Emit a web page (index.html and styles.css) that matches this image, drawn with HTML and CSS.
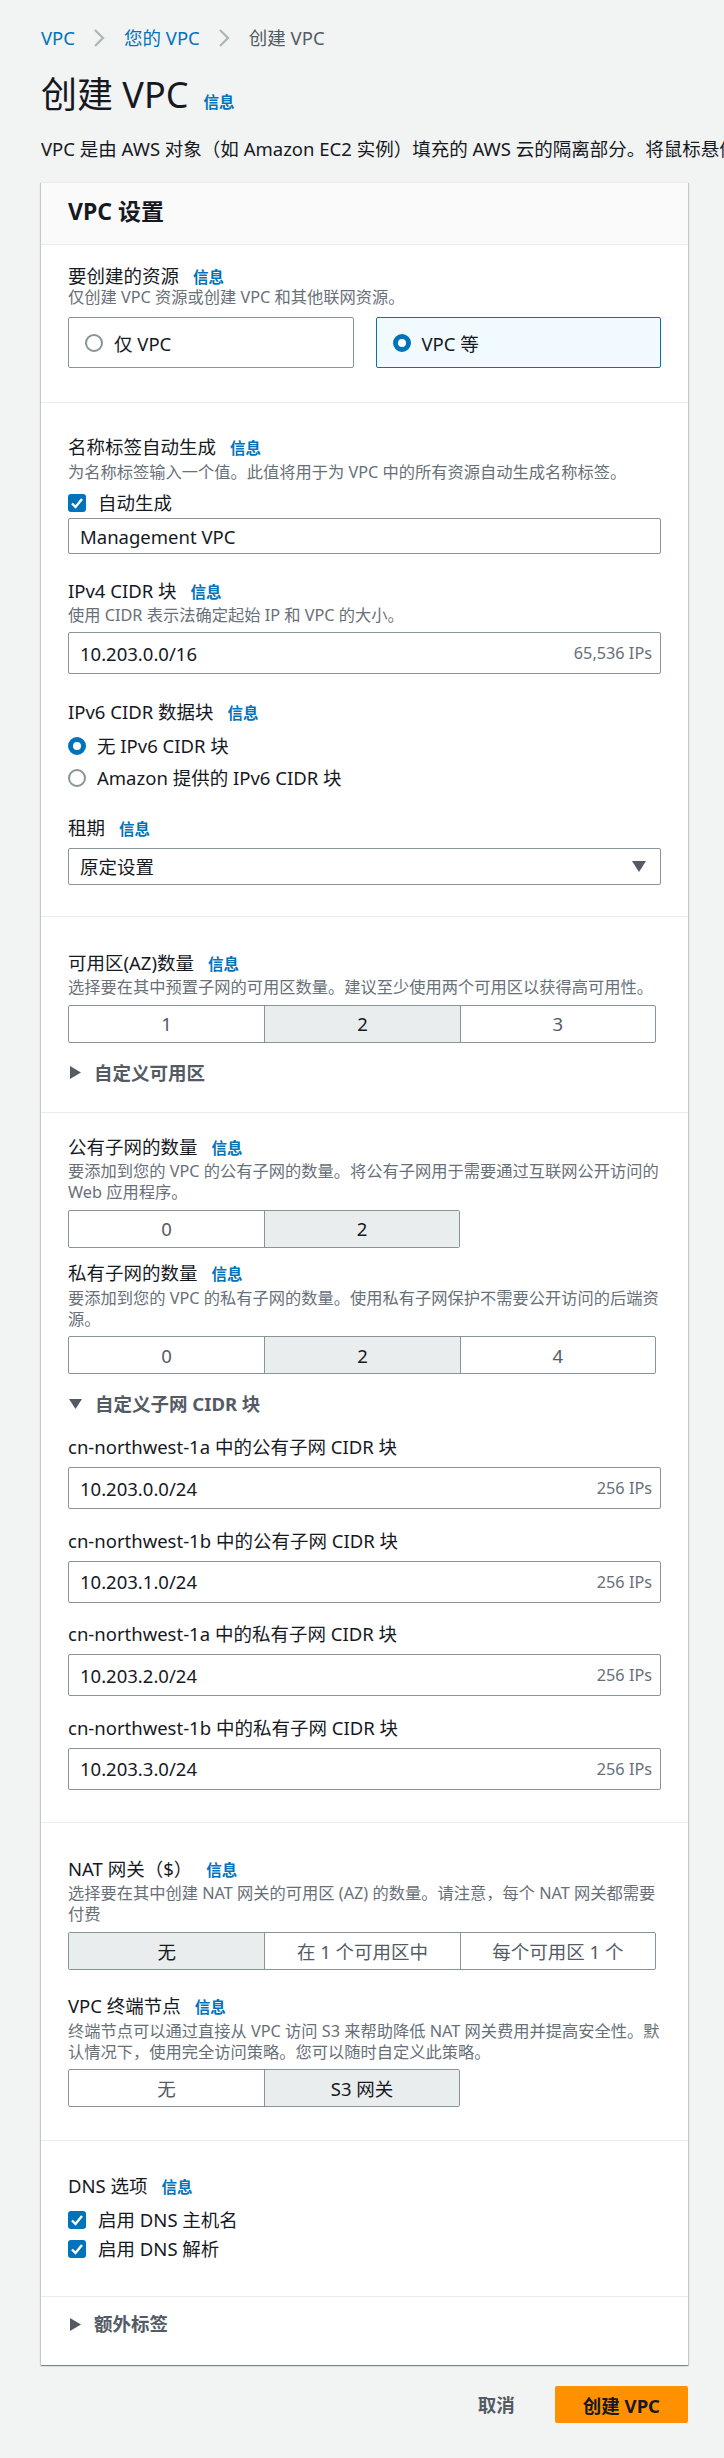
FILE: index.html
```html
<!DOCTYPE html>
<html lang="zh-CN">
<head>
<meta charset="utf-8">
<title>创建 VPC</title>
<link rel="stylesheet" href="styles.css">
</head>
<body>
<div class="page">
  <nav class="breadcrumb">
    <a class="crumb-link">VPC</a>
    <svg class="chev" viewBox="0 0 12 20"><path d="M2 2 L10 10 L2 18"/></svg>
    <a class="crumb-link">您的 VPC</a>
    <svg class="chev" viewBox="0 0 12 20"><path d="M2 2 L10 10 L2 18"/></svg>
    <span class="crumb-current">创建 VPC</span>
  </nav>

  <h1 class="title">创建 VPC<a class="info info-title">信息</a></h1>
  <p class="intro">VPC 是由 AWS 对象（如 Amazon EC2 实例）填充的 AWS 云的隔离部分。将鼠标悬停在资源上可突出显示相关资源。</p>

  <div class="card">
    <div class="card-head"><h2>VPC 设置</h2></div>

    <section class="sec sec-resources">
      <div class="label">要创建的资源<a class="info">信息</a></div>
      <div class="desc desc-tight">仅创建 VPC 资源或创建 VPC 和其他联网资源。</div>
      <div class="tiles">
        <div class="tile"><span class="radio"></span><span>仅 VPC</span></div>
        <div class="tile tile-selected"><span class="radio radio-checked"></span><span>VPC 等</span></div>
      </div>
    </section>

    <section class="sec sec-name">
      <div class="label">名称标签自动生成<a class="info">信息</a></div>
      <div class="desc">为名称标签输入一个值。此值将用于为 VPC 中的所有资源自动生成名称标签。</div>
      <div class="check-row check-autogen">
        <span class="checkbox"><svg viewBox="0 0 18 18"><path d="M4 9.5 L7.5 13 L14 5"/></svg></span>
        <span>自动生成</span>
      </div>
      <div class="input input-name">Management VPC</div>

      <div class="label field-gap">IPv4 CIDR 块<a class="info">信息</a></div>
      <div class="desc">使用 CIDR 表示法确定起始 IP 和 VPC 的大小。</div>
      <div class="input input-cidr input-ipv4"><span>10.203.0.0/16</span><span class="suffix">65,536 IPs</span></div>

      <div class="label field-gap-lg">IPv6 CIDR 数据块<a class="info">信息</a></div>
      <div class="radio-row radio-first"><span class="radio radio-checked"></span><span>无 IPv6 CIDR 块</span></div>
      <div class="radio-row radio-second"><span class="radio"></span><span>Amazon 提供的 IPv6 CIDR 块</span></div>

      <div class="label lease-label">租期<a class="info">信息</a></div>
      <div class="select">
        <span>原定设置</span>
        <svg class="select-arrow" viewBox="0 0 14 11"><path d="M0 0 H14 L7 11 Z"/></svg>
      </div>
    </section>

    <section class="sec sec-az">
      <div class="label">可用区(AZ)数量<a class="info">信息</a></div>
      <div class="desc">选择要在其中预置子网的可用区数量。建议至少使用两个可用区以获得高可用性。</div>
      <div class="seg seg-3 seg-after-desc">
        <div class="seg-item">1</div>
        <div class="seg-item seg-on">2</div>
        <div class="seg-item">3</div>
      </div>
      <div class="expander expander-az">
        <svg class="tri-right" viewBox="0 0 11 13"><path d="M0 0 L11 6.5 L0 13 Z"/></svg>
        <span>自定义可用区</span>
      </div>
    </section>

    <section class="sec sec-subnets">
      <div class="label">公有子网的数量<a class="info">信息</a></div>
      <div class="desc">要添加到您的 VPC 的公有子网的数量。将公有子网用于需要通过互联网公开访问的 Web 应用程序。</div>
      <div class="seg seg-2 seg-after-desc">
        <div class="seg-item">0</div>
        <div class="seg-item seg-on">2</div>
      </div>

      <div class="label private-label">私有子网的数量<a class="info">信息</a></div>
      <div class="desc">要添加到您的 VPC 的私有子网的数量。使用私有子网保护不需要公开访问的后端资源。</div>
      <div class="seg seg-3 seg-after-desc">
        <div class="seg-item">0</div>
        <div class="seg-item seg-on">2</div>
        <div class="seg-item">4</div>
      </div>

      <div class="expander expander-cidr">
        <svg class="tri-down" viewBox="0 0 13 10"><path d="M0 0 H13 L6.5 10 Z"/></svg>
        <span>自定义子网 CIDR 块</span>
      </div>

      <div class="cidr-field cidr-first">
        <div class="label">cn-northwest-1a 中的公有子网 CIDR 块</div>
        <div class="input input-cidr input-subnet"><span>10.203.0.0/24</span><span class="suffix">256 IPs</span></div>
      </div>
      <div class="cidr-field">
        <div class="label">cn-northwest-1b 中的公有子网 CIDR 块</div>
        <div class="input input-cidr input-subnet"><span>10.203.1.0/24</span><span class="suffix">256 IPs</span></div>
      </div>
      <div class="cidr-field">
        <div class="label">cn-northwest-1a 中的私有子网 CIDR 块</div>
        <div class="input input-cidr input-subnet"><span>10.203.2.0/24</span><span class="suffix">256 IPs</span></div>
      </div>
      <div class="cidr-field">
        <div class="label">cn-northwest-1b 中的私有子网 CIDR 块</div>
        <div class="input input-cidr input-subnet"><span>10.203.3.0/24</span><span class="suffix">256 IPs</span></div>
      </div>
    </section>

    <section class="sec sec-nat">
      <div class="label">NAT 网关（$）<a class="info">信息</a></div>
      <div class="desc">选择要在其中创建 NAT 网关的可用区 (AZ) 的数量。请注意，每个 NAT 网关都需要付费</div>
      <div class="seg seg-3 seg-after-desc">
        <div class="seg-item seg-on">无</div>
        <div class="seg-item">在 1 个可用区中</div>
        <div class="seg-item">每个可用区 1 个</div>
      </div>

      <div class="label field-gap">VPC 终端节点<a class="info">信息</a></div>
      <div class="desc">终端节点可以通过直接从 VPC 访问 S3 来帮助降低 NAT 网关费用并提高安全性。默认情况下，使用完全访问策略。您可以随时自定义此策略。</div>
      <div class="seg seg-2 seg-after-desc">
        <div class="seg-item">无</div>
        <div class="seg-item seg-on">S3 网关</div>
      </div>
    </section>

    <section class="sec sec-dns">
      <div class="label">DNS 选项<a class="info">信息</a></div>
      <div class="check-row dns-first">
        <span class="checkbox"><svg viewBox="0 0 18 18"><path d="M4 9.5 L7.5 13 L14 5"/></svg></span>
        <span>启用 DNS 主机名</span>
      </div>
      <div class="check-row dns-second">
        <span class="checkbox"><svg viewBox="0 0 18 18"><path d="M4 9.5 L7.5 13 L14 5"/></svg></span>
        <span>启用 DNS 解析</span>
      </div>
    </section>

    <section class="sec sec-tags">
      <div class="expander">
        <svg class="tri-right" viewBox="0 0 11 13"><path d="M0 0 L11 6.5 L0 13 Z"/></svg>
        <span>额外标签</span>
      </div>
    </section>
  </div>

  <div class="actions">
    <a class="btn-cancel">取消</a>
    <a class="btn-primary">创建 VPC</a>
  </div>
</div>
</body>
</html>
```

FILE: styles.css
```css
* { box-sizing: border-box; }

html, body {
  margin: 0;
  padding: 0;
  background: #f2f3f3;
}

body {
  font-family: "Noto Sans", "Noto Sans CJK SC", sans-serif;
  font-size: 18.5px;
  color: #16191f;
  overflow-x: hidden;
}

.page {
  padding: 26px 0 0 41px;
  min-height: 2458px;
}

/* breadcrumb */
.breadcrumb {
  display: flex;
  align-items: center;
  height: 24px;
  line-height: 24px;
}
.crumb-link { color: #0073bb; }
.crumb-current { color: #545b64; }
.chev {
  width: 12px;
  height: 20px;
  margin: 0 19px 0 18px;
  fill: none;
  stroke: #aab7b8;
  stroke-width: 2.2;
}

/* title */
.title {
  margin: 23px 0 0;
  font-size: 36px;
  line-height: 44px;
  font-weight: 400;
}
.info {
  font-size: 15.5px;
  line-height: 14px;
  font-weight: 700;
  color: #0073bb;
  margin-left: 14px;
}
.info-title { margin-left: 15px; }

.intro {
  margin: 20px 0 0;
  line-height: 24px;
  white-space: nowrap;
  overflow: hidden;
}

/* card */
.card {
  width: 647px;
  margin-top: 21px;
  background: #fff;
  box-shadow: 0 1px 1px 0 rgba(0, 28, 36, 0.3), 1px 1px 1px 0 rgba(0, 28, 36, 0.15), -1px 1px 1px 0 rgba(0, 28, 36, 0.15);
  border-top: 1px solid #eaeded;
}
.card-head {
  background: #fafafa;
  border-bottom: 1px solid #eaeded;
  padding: 13px 27px 18px;
}
.card-head h2 {
  margin: 0;
  font-size: 23px;
  line-height: 30px;
  font-weight: 700;
}

.sec {
  padding: 0 27px 0 27px;
  border-top: 1px solid #eaeded;
}
.sec-resources { border-top: none; padding-top: 19px; padding-bottom: 34px; }
.sec-name { padding-top: 32px; padding-bottom: 31px; }
.sec-az { padding-top: 34px; padding-bottom: 27px; }
.sec-subnets { padding-top: 22px; padding-bottom: 32px; }
.sec-nat { padding-top: 34px; padding-bottom: 33px; }
.sec-dns { padding-top: 33px; padding-bottom: 35px; }
.sec-tags { padding-top: 15px; padding-bottom: 29px; }

.label {
  line-height: 24px;
  color: #16191f;
}
.desc {
  margin-top: 2.5px;
  font-size: 16.25px;
  line-height: 21px;
  color: #687078;
}
.desc-tight { margin-top: -1px; }

.field-gap { margin-top: 24.5px; }
.field-gap-lg { margin-top: 25.5px; }
.lease-label { margin-top: 26px; }
.private-label { margin-top: 13.5px; }

/* tiles */
.tiles {
  display: grid;
  grid-template-columns: 1fr 1fr;
  gap: 22px;
  margin-top: 9px;
}
.tile {
  height: 51px;
  border: 1px solid #879596;
  border-radius: 2px;
  display: flex;
  align-items: center;
  gap: 11px;
  padding-left: 16px;
}
.tile-selected {
  border-color: #0073bb;
  background: #f1faff;
}

/* radio & checkbox */
.radio {
  flex: none;
  width: 18px;
  height: 18px;
  border-radius: 50%;
  border: 2px solid #879596;
  background: #fff;
}
.radio-checked { border: 5.5px solid #0073bb; }

.radio-row {
  display: flex;
  align-items: center;
  gap: 11px;
  line-height: 24px;
}
.radio-first { margin-top: 10px; }
.radio-second { margin-top: 8px; }

.check-row {
  display: flex;
  align-items: center;
  gap: 12px;
  line-height: 24px;
}
.check-autogen { margin-top: 8.5px; }
.dns-first { margin-top: 10px; }
.dns-second { margin-top: 5px; }

.checkbox {
  flex: none;
  width: 18px;
  height: 18px;
  border-radius: 3px;
  background: #0073bb;
  display: flex;
}
.checkbox svg {
  width: 18px;
  height: 18px;
  fill: none;
  stroke: #fff;
  stroke-width: 2.4;
}

/* inputs */
.input {
  display: flex;
  align-items: center;
  justify-content: space-between;
  border: 1px solid #879596;
  border-radius: 2px;
  padding: 0 8px 0 11px;
  background: #fff;
}
.input-name { height: 36px; margin-top: 3px; }
.input-cidr { height: 42px; }
.input-ipv4 { margin-top: 6px; }
.input-subnet { margin-top: 8px; }
.suffix {
  font-size: 16.25px;
  color: #687078;
}

.select {
  display: flex;
  align-items: center;
  justify-content: space-between;
  height: 37px;
  margin-top: 8px;
  border: 1px solid #879596;
  border-radius: 2px;
  padding: 0 14px 0 11px;
}
.select-arrow {
  width: 14px;
  height: 11px;
  fill: #545b64;
}

/* segmented */
.seg {
  display: grid;
  height: 38px;
  border: 1px solid #879596;
  border-radius: 2px;
  overflow: hidden;
}
.seg-3 { width: 588px; grid-template-columns: repeat(3, 1fr); }
.seg-2 { width: 392px; grid-template-columns: repeat(2, 1fr); }
.seg-after-desc { margin-top: 6.5px; }
.seg-item {
  display: flex;
  align-items: center;
  justify-content: center;
  color: #545b64;
  border-left: 1px solid #879596;
}
.seg-item:first-child { border-left: none; }
.seg-on {
  background: #eaeded;
  color: #16191f;
}

/* expander */
.expander {
  display: flex;
  align-items: center;
  line-height: 24px;
  font-weight: 700;
  color: #545b64;
}
.expander-az { margin-top: 18px; }
.expander-cidr { margin-top: 18px; }
.tri-right {
  width: 11px;
  height: 13px;
  margin: 0 13px 0 2px;
  fill: #545b64;
}
.tri-down {
  width: 13px;
  height: 10px;
  margin: 0 13px 0 1px;
  fill: #545b64;
}

.cidr-field { margin-top: 19.5px; }
.cidr-first { margin-top: 19px; }

/* actions */
.actions {
  width: 647px;
  display: flex;
  justify-content: flex-end;
  align-items: center;
  margin-top: 21px;
}
.btn-cancel {
  font-weight: 700;
  color: #545b64;
  padding: 0 20px;
  margin-right: 20px;
  line-height: 36px;
}
.btn-primary {
  display: flex;
  align-items: center;
  height: 37px;
  padding: 0 28px;
  background: #ff9100;
  border-radius: 2px;
  font-weight: 700;
  color: #16191f;
}
```
